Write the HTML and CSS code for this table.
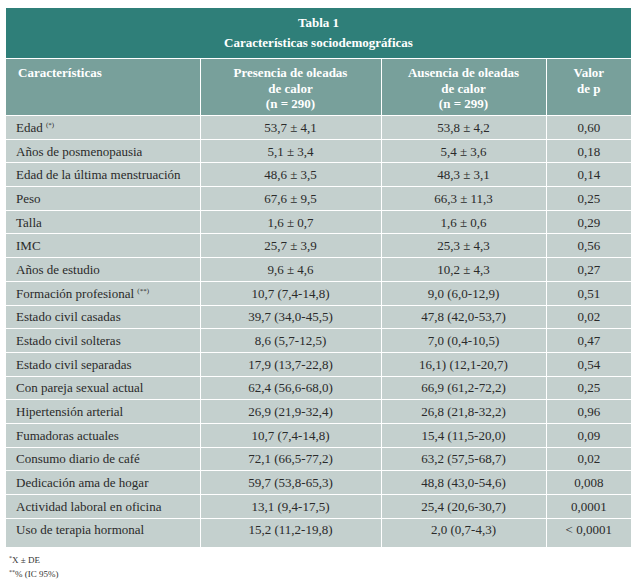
FILE: index.html
```html
<!DOCTYPE html>
<html lang="es">
<head>
<meta charset="utf-8">
<title>Tabla 1</title>
<link rel="stylesheet" href="styles.css">
</head>
<body>
<div class="page">
<table class="data">
  <colgroup>
    <col class="c1"><col class="c2"><col class="c3"><col class="c4">
  </colgroup>
  <thead>
    <tr><th colspan="4" class="title">Tabla 1<br>Características sociodemográficas</th></tr>
    <tr class="head">
      <th class="left">Características</th>
      <th>Presencia de oleadas<br>de calor<br>(n = 290)</th>
      <th>Ausencia de oleadas<br>de calor<br>(n = 299)</th>
      <th>Valor<br>de p</th>
    </tr>
  </thead>
  <tbody>
    <tr><td>Edad <sup>(*)</sup></td><td>53,7 ± 4,1</td><td>53,8 ± 4,2</td><td>0,60</td></tr>
    <tr><td>Años de posmenopausia</td><td>5,1 ± 3,4</td><td>5,4 ± 3,6</td><td>0,18</td></tr>
    <tr><td>Edad de la última menstruación</td><td>48,6 ± 3,5</td><td>48,3 ± 3,1</td><td>0,14</td></tr>
    <tr><td>Peso</td><td>67,6 ± 9,5</td><td>66,3 ± 11,3</td><td>0,25</td></tr>
    <tr><td>Talla</td><td>1,6 ± 0,7</td><td>1,6 ± 0,6</td><td>0,29</td></tr>
    <tr><td>IMC</td><td>25,7 ± 3,9</td><td>25,3 ± 4,3</td><td>0,56</td></tr>
    <tr><td>Años de estudio</td><td>9,6 ± 4,6</td><td>10,2 ± 4,3</td><td>0,27</td></tr>
    <tr><td>Formación profesional <sup>(**)</sup></td><td>10,7 (7,4-14,8)</td><td>9,0 (6,0-12,9)</td><td>0,51</td></tr>
    <tr><td>Estado civil casadas</td><td>39,7 (34,0-45,5)</td><td>47,8 (42,0-53,7)</td><td>0,02</td></tr>
    <tr><td>Estado civil solteras</td><td>8,6 (5,7-12,5)</td><td>7,0 (0,4-10,5)</td><td>0,47</td></tr>
    <tr><td>Estado civil separadas</td><td>17,9 (13,7-22,8)</td><td>16,1) (12,1-20,7)</td><td>0,54</td></tr>
    <tr><td>Con pareja sexual actual</td><td>62,4 (56,6-68,0)</td><td>66,9 (61,2-72,2)</td><td>0,25</td></tr>
    <tr><td>Hipertensión arterial</td><td>26,9 (21,9-32,4)</td><td>26,8 (21,8-32,2)</td><td>0,96</td></tr>
    <tr><td>Fumadoras actuales</td><td>10,7 (7,4-14,8)</td><td>15,4 (11,5-20,0)</td><td>0,09</td></tr>
    <tr><td>Consumo diario de café</td><td>72,1 (66,5-77,2)</td><td>63,2 (57,5-68,7)</td><td>0,02</td></tr>
    <tr><td>Dedicación ama de hogar</td><td>59,7 (53,8-65,3)</td><td>48,8 (43,0-54,6)</td><td>0,008</td></tr>
    <tr><td>Actividad laboral en oficina</td><td>13,1 (9,4-17,5)</td><td>25,4 (20,6-30,7)</td><td>0,0001</td></tr>
    <tr class="last"><td>Uso de terapia hormonal</td><td>15,2 (11,2-19,8)</td><td>2,0 (0,7-4,3)</td><td>&lt; 0,0001</td></tr>
  </tbody>
</table>
<div class="notes">
  <p><sup>*</sup>X ± DE</p>
  <p><sup>**</sup>% (IC 95%)</p>
</div>
</div>
</body>
</html>
```

FILE: styles.css
```css
html, body {
  margin: 0;
  padding: 0;
  background: #ffffff;
}
body {
  font-family: "Liberation Serif", "Times New Roman", serif;
  color: #2a2a2a;
}
.page {
  padding: 8px 5px 0 6px;
}
.data {
  width: 625px;
  border-collapse: collapse;
  table-layout: fixed;
  font-size: 13px;
}
.c1 { width: 194px; }
.c2 { width: 181px; }
.c3 { width: 165px; }
.c4 { width: 85px; }

.data th, .data td {
  border: 1px solid #ffffff;
  padding: 0;
}
.data tr > :first-child { border-left: none; }
.data tr > :last-child { border-right: none; }

.title {
  background: #2f7f79;
  color: #ffffff;
  font-weight: bold;
  font-size: 13px;
  line-height: 20px;
  height: 50px;
  padding: 4px 0 2px 0;
  text-align: center;
  border-top: none !important;
}
.head th {
  background: #78a09b;
  color: #ffffff;
  font-weight: bold;
  font-size: 13px;
  line-height: 15.5px;
  text-align: center;
  vertical-align: top;
  height: 50px;
  padding: 6px 4px 0 4px;
}
.head th.left {
  text-align: left;
  padding-left: 12px;
}
.data td {
  background: #c4d0ce;
  height: 21.7px;
  text-align: center;
  vertical-align: middle;
  line-height: 16px;
  padding: 1px 0 0 0;
}
.data td:first-child {
  text-align: left;
  padding-left: 10px;
}
.data tr.last td {
  height: 23px;
  padding-top: 0;
  padding-bottom: 5px;
  border-bottom: none;
}
sup {
  font-size: 7px;
  vertical-align: 5px;
  line-height: 0;
}
.notes {
  padding: 6px 0 0 3px;
  font-size: 9px;
  color: #333333;
}
.notes p {
  margin: 0;
  line-height: 14px;
}
.notes sup {
  font-size: 6px;
  vertical-align: 3px;
}
```
